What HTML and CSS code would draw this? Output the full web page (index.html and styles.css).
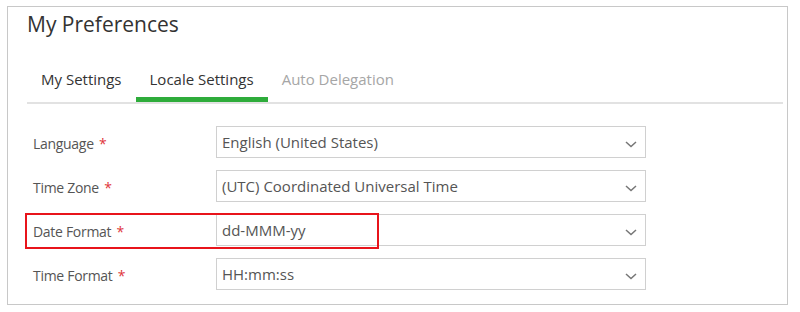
FILE: index.html
```html
<!DOCTYPE html>
<html>
<head>
<meta charset="utf-8">
<link rel="stylesheet" href="styles.css">
</head>
<body>
<div class="card">
  <h1 class="title">My Preferences</h1>
  <div class="tabs">
    <div class="tab">My Settings</div>
    <div class="tab active">Locale Settings</div>
    <div class="tab disabled">Auto Delegation</div>
  </div>
  <div class="form">
    <div class="row">
      <div class="label">Language <span class="req">*</span></div>
      <div class="select"><span class="value">English (United States)</span><svg class="chev" width="12" height="7" viewBox="0 0 12 7"><path d="M1 1 L6 5.5 L11 1" fill="none" stroke="#777" stroke-width="1.5"/></svg></div>
    </div>
    <div class="row">
      <div class="label">Time Zone <span class="req">*</span></div>
      <div class="select"><span class="value">(UTC) Coordinated Universal Time</span><svg class="chev" width="12" height="7" viewBox="0 0 12 7"><path d="M1 1 L6 5.5 L11 1" fill="none" stroke="#777" stroke-width="1.5"/></svg></div>
    </div>
    <div class="row">
      <div class="label">Date Format <span class="req">*</span></div>
      <div class="select"><span class="value">dd-MMM-yy</span><svg class="chev" width="12" height="7" viewBox="0 0 12 7"><path d="M1 1 L6 5.5 L11 1" fill="none" stroke="#777" stroke-width="1.5"/></svg></div>
      <div class="highlight"></div>
    </div>
    <div class="row">
      <div class="label">Time Format <span class="req">*</span></div>
      <div class="select"><span class="value">HH:mm:ss</span><svg class="chev" width="12" height="7" viewBox="0 0 12 7"><path d="M1 1 L6 5.5 L11 1" fill="none" stroke="#777" stroke-width="1.5"/></svg></div>
    </div>
  </div>
</div>
</body>
</html>
```
FILE: styles.css
```css
html, body {
  margin: 0;
  padding: 0;
  background: #fff;
}
body {
  font-family: "Open Sans", "Noto Sans", sans-serif;
  color: #444;
}
.card {
  box-sizing: border-box;
  margin: 6px 0 0 7px;
  width: 781px;
  height: 299px;
  border: 1px solid #c8c8c8;
  padding: 0 4px 0 19px;
}
.title {
  margin: 0;
  padding-top: 2px;
  font-size: 21px;
  font-weight: 400;
  line-height: 30px;
  color: #333;
}
.tabs {
  display: flex;
  margin-top: 29px;
  border-bottom: 2px solid #e2e2e2;
  height: 34px;
  box-sizing: content-box;
}
.tab {
  padding: 1px 14px 0;
  font-size: 15px;
  line-height: 20px;
  color: #333;
  box-sizing: border-box;
  height: 34px;
}
.tab.active {
  border-bottom: 5px solid #2eac3b;
}
.tab.disabled {
  color: #a6a6a6;
}
.form {
  display: flex;
  flex-direction: column;
  gap: 12px;
  padding: 22px 0 0 6px;
}
.row {
  position: relative;
  display: flex;
  align-items: center;
  height: 32px;
}
.label {
  width: 183px;
  font-size: 14px;
  color: #555;
  letter-spacing: -0.3px;
  padding-top: 2px;
}
.req {
  color: #e0363a;
  margin-left: 2px;
}
.select {
  box-sizing: border-box;
  width: 430px;
  height: 32px;
  border: 1px solid #d0d0d0;
  display: flex;
  align-items: center;
  justify-content: space-between;
  padding: 0 8px 0 5px;
  font-size: 15px;
  color: #555;
}
.chev {
  margin-top: 5px;
}
.highlight {
  position: absolute;
  left: -8px;
  top: -1px;
  width: 354px;
  height: 36px;
  box-sizing: border-box;
  border: 2px solid #e8141b;
  pointer-events: none;
}
```
